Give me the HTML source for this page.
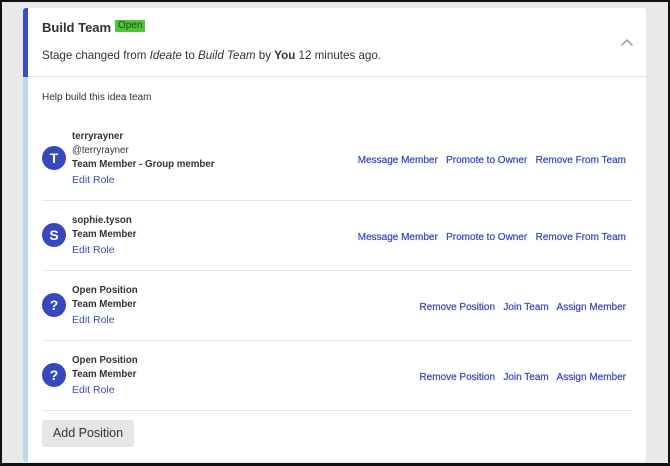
<!DOCTYPE html>
<html><head><style>
*{margin:0;padding:0;box-sizing:border-box}
body{width:670px;height:466px;background:#e9e9e9;font-family:"Liberation Sans",sans-serif;position:relative;overflow:hidden;color:#222}
.frame{position:absolute;left:0;top:0;width:670px;height:466px;border:2px solid #111;border-bottom-width:3px}
.card{position:absolute;left:23px;top:8px;width:623px;height:454px;background:#fff;border-radius:3px;overflow:hidden}
.barTop{position:absolute;left:0;top:0;width:5px;height:69px;background:#3a4cc4}
.barBot{position:absolute;left:0;top:69px;width:5px;bottom:0;background:#bcd7ea}
.hdiv{position:absolute;left:5px;right:0;top:68px;height:1px;background:#e3e3e3}
.abs{position:absolute;white-space:nowrap}
.title{left:19px;top:12px;font-size:13px;font-weight:bold;color:#333}
.badge{left:92px;top:12px;background:#4ec43a;color:#1f4d12;font-size:10px;padding:0 3px;height:12px;line-height:12px;border-radius:1px}
.stage{left:19px;top:41px;font-size:11.6px;color:#333}
.help{left:19px;top:84px;font-size:10px;color:#333}
.av{position:absolute;left:19px;width:24px;height:24px;border-radius:50%;background:#3747c0;color:#fff;font-weight:bold;font-size:14px;text-align:center;line-height:24px}
.t{left:49px;font-size:9.7px;color:#333}
.b{font-weight:bold}
.l{color:#3a4cc4;font-size:10.5px}
.r{font-size:10px;-webkit-text-stroke:0.25px #3a4cc4}
.sep{position:absolute;left:19px;width:590px;height:1px;background:#e6e6e6}
.btn{left:19px;top:412px;width:92px;height:27px;background:#e6e6e6;border-radius:3px;font-size:12.5px;color:#333;text-align:center;line-height:27px}
.chev{left:597px;top:30px}
</style></head><body>
<div class="frame"></div>
<div class="card">
<div class="barTop"></div><div class="barBot"></div><div class="hdiv"></div>
<div class="abs title">Build Team</div>
<div class="abs badge">Open</div>
<div class="abs stage">Stage changed from <i>Ideate</i> to <i>Build Team</i> by <b>You</b> 12 minutes ago.</div>
<svg class="abs chev" width="14" height="9" viewBox="0 0 14 9"><path d="M1.5 7.5L7 2l5.5 5.5" fill="none" stroke="#999" stroke-width="1.5"/></svg>
<div class="abs help">Help build this idea team</div>

<div class="av" style="top:138px">T</div>
<div class="abs t b" style="top:123px">terryrayner</div>
<div class="abs t" style="top:137px">@terryrayner</div>
<div class="abs t b" style="top:151px">Team Member - Group member</div>
<div class="abs l" style="left:49px;top:166px">Edit Role</div>
<div class="abs l r" style="right:20px;top:147px">Message Member&nbsp;&nbsp; Promote to Owner&nbsp;&nbsp; Remove From Team</div>
<div class="sep" style="top:192px"></div>

<div class="av" style="top:215px">S</div>
<div class="abs t b" style="top:207px">sophie.tyson</div>
<div class="abs t b" style="top:221px">Team Member</div>
<div class="abs l" style="left:49px;top:236px">Edit Role</div>
<div class="abs l r" style="right:20px;top:224px">Message Member&nbsp;&nbsp; Promote to Owner&nbsp;&nbsp; Remove From Team</div>
<div class="sep" style="top:262px"></div>

<div class="av" style="top:285px">?</div>
<div class="abs t b" style="top:277px">Open Position</div>
<div class="abs t b" style="top:291px">Team Member</div>
<div class="abs l" style="left:49px;top:306px">Edit Role</div>
<div class="abs l r" style="right:20px;top:294px">Remove Position&nbsp;&nbsp; Join Team&nbsp;&nbsp; Assign Member</div>
<div class="sep" style="top:332px"></div>

<div class="av" style="top:355px">?</div>
<div class="abs t b" style="top:347px">Open Position</div>
<div class="abs t b" style="top:361px">Team Member</div>
<div class="abs l" style="left:49px;top:376px">Edit Role</div>
<div class="abs l r" style="right:20px;top:364px">Remove Position&nbsp;&nbsp; Join Team&nbsp;&nbsp; Assign Member</div>
<div class="sep" style="top:402px"></div>

<div class="abs btn">Add Position</div>
</div>
</body></html>
